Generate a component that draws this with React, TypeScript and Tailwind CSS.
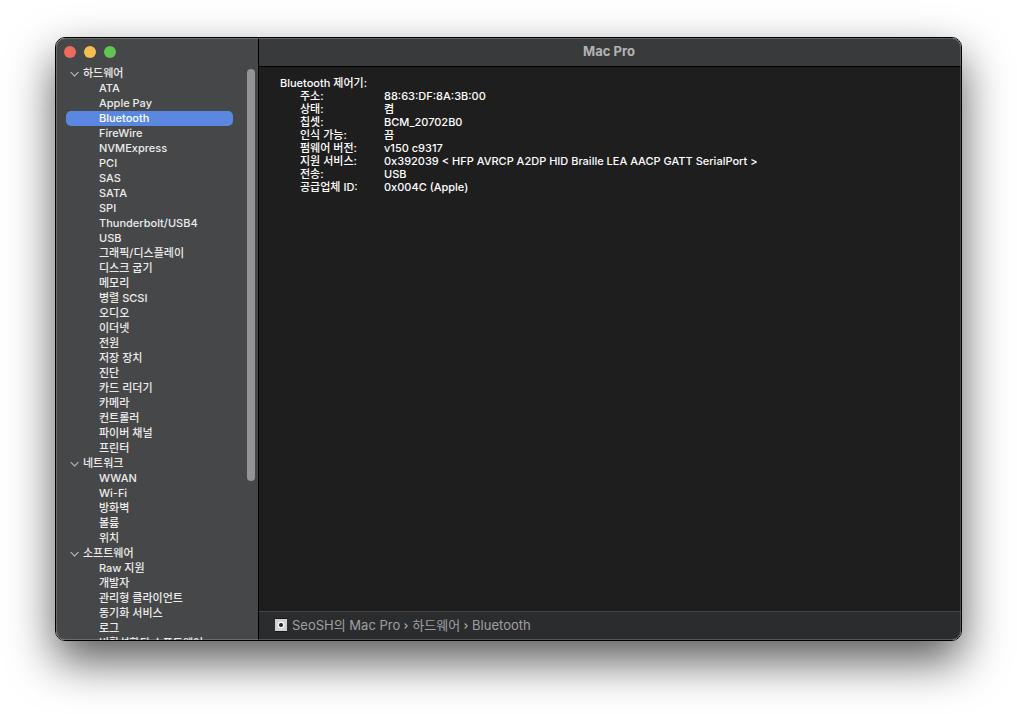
import { useState } from "react";
import { clsx } from "clsx";

type Section = {
  title: string;
  items: string[];
};

type DetailRow = {
  label: string;
  value: string;
};

const sections: Section[] = [
  {
    title: "하드웨어",
    items: [
      "ATA",
      "Apple Pay",
      "Bluetooth",
      "FireWire",
      "NVMExpress",
      "PCI",
      "SAS",
      "SATA",
      "SPI",
      "Thunderbolt/USB4",
      "USB",
      "그래픽/디스플레이",
      "디스크 굽기",
      "메모리",
      "병렬 SCSI",
      "오디오",
      "이더넷",
      "전원",
      "저장 장치",
      "진단",
      "카드 리더기",
      "카메라",
      "컨트롤러",
      "파이버 채널",
      "프린터",
    ],
  },
  {
    title: "네트워크",
    items: ["WWAN", "Wi-Fi", "방화벽", "볼륨", "위치"],
  },
  {
    title: "소프트웨어",
    items: [
      "Raw 지원",
      "개발자",
      "관리형 클라이언트",
      "동기화 서비스",
      "로그",
      "비활성화된 소프트웨어",
    ],
  },
];

const bluetoothRows: DetailRow[] = [
  { label: "주소:", value: "88:63:DF:8A:3B:00" },
  { label: "상태:", value: "켬" },
  { label: "칩셋:", value: "BCM_20702B0" },
  { label: "인식 가능:", value: "끔" },
  { label: "펌웨어 버전:", value: "v150 c9317" },
  {
    label: "지원 서비스:",
    value: "0x392039 < HFP AVRCP A2DP HID Braille LEA AACP GATT SerialPort >",
  },
  { label: "전송:", value: "USB" },
  { label: "공급업체 ID:", value: "0x004C (Apple)" },
];

function WindowControls() {
  return (
    <div className="flex h-7 shrink-0 items-center gap-2 pl-2">
      <button type="button" aria-label="닫기" className="size-3 rounded-full bg-[#ed6a5e]" />
      <button type="button" aria-label="최소화" className="size-3 rounded-full bg-[#f4bf4f]" />
      <button type="button" aria-label="확대" className="size-3 rounded-full bg-[#61c554]" />
    </div>
  );
}

function Disclosure({ open }: { open: boolean }) {
  return (
    <svg
      viewBox="0 0 9 9"
      className={clsx("size-[9px] shrink-0", !open && "-rotate-90")}
      fill="none"
      aria-hidden
    >
      <path
        d="M1.1 3.4 4.6 7 8.1 3.4"
        stroke="#adadae"
        strokeWidth="1.3"
        strokeLinecap="round"
        strokeLinejoin="round"
      />
    </svg>
  );
}

function Sidebar({
  selected,
  onSelect,
}: {
  selected: string;
  onSelect: (item: string) => void;
}) {
  const [collapsed, setCollapsed] = useState<string[]>([]);

  const toggle = (title: string) =>
    setCollapsed((prev) =>
      prev.includes(title) ? prev.filter((t) => t !== title) : [...prev, title],
    );

  return (
    <aside className="relative flex w-[203px] shrink-0 flex-col border-r border-black bg-[#464749]">
      <WindowControls />
      <nav
        aria-label="항목"
        className="min-h-0 flex-1 overflow-hidden pr-[25px] pl-2.5 text-[11px] leading-[15px] font-medium text-[#ececec]"
      >
        {sections.map((section) => {
          const open = !collapsed.includes(section.title);
          return (
            <section key={section.title}>
              <button
                type="button"
                aria-expanded={open}
                onClick={() => toggle(section.title)}
                className="flex h-[15px] w-full items-center gap-1 pl-1"
              >
                <Disclosure open={open} />
                {section.title}
              </button>
              {open && (
                <ul>
                  {section.items.map((item) => (
                    <li key={item}>
                      <button
                        type="button"
                        onClick={() => onSelect(item)}
                        className={clsx(
                          "block h-[15px] w-full rounded-[5px] pl-[33px] text-left whitespace-nowrap",
                          item === selected && "bg-[#5a88e0] text-white",
                        )}
                      >
                        {item}
                      </button>
                    </li>
                  ))}
                </ul>
              )}
            </section>
          );
        })}
      </nav>
      {/* overlay scroller */}
      <div className="absolute top-[31px] right-[3px] h-[412px] w-2 rounded-full bg-[#949496]" />
    </aside>
  );
}

function DetailPane() {
  return (
    <main className="min-h-0 flex-1 overflow-hidden bg-[#1e1e1e] px-[21px] pt-2.5 text-[11px] leading-[13px] font-medium text-white">
      <h2>Bluetooth 제어기:</h2>
      <table className="ml-5 border-collapse text-left">
        <tbody>
          {bluetoothRows.map((row) => (
            <tr key={row.label}>
              <th scope="row" className="w-[84px] p-0 font-medium">
                {row.label}
              </th>
              <td className="p-0">{row.value}</td>
            </tr>
          ))}
        </tbody>
      </table>
    </main>
  );
}

function DiskIcon() {
  return (
    <svg viewBox="0 0 12 14" className="mr-px h-3.5 w-3" aria-hidden>
      <rect x="0" y="0" width="12" height="14" fill="#161617" />
      <rect x="0" y="1" width="12" height="12" fill="#d2d2d4" />
      <circle cx="6" cy="7" r="3.4" fill="#f3f3f3" />
      <circle cx="6" cy="7" r="2" fill="#1a1a1a" />
      <circle cx="6" cy="7" r="0.6" fill="#555" />
    </svg>
  );
}

function PathSeparator() {
  return (
    <svg viewBox="0 0 4 6" className="mt-px h-1.5 w-1" fill="none" aria-hidden>
      <path d="M0.7 0.5 3.2 3 0.7 5.5" stroke="#a4a4a6" strokeWidth="1.2" />
    </svg>
  );
}

function PathBar({ selected }: { selected: string }) {
  return (
    <footer className="h-[29px] shrink-0 border-t border-[#454547] bg-[#2b2c2e] pl-4">
      <nav
        aria-label="경로"
        className="flex h-full items-center gap-1 pb-0.5 text-[13px] leading-4 whitespace-nowrap text-[#a0a0a2]"
      >
        <DiskIcon />
        <a href="#mac">SeoSH의 Mac Pro</a>
        <PathSeparator />
        <a href="#hardware">하드웨어</a>
        <PathSeparator />
        <a href="#selected">{selected}</a>
      </nav>
    </footer>
  );
}

export default function App() {
  const [selected, setSelected] = useState("Bluetooth");

  return (
    <div className="flex h-screen overflow-hidden bg-white px-[55px] pt-[37px] pb-[73px] font-['Inter','Noto_Sans_CJK_KR',sans-serif]">
      <div className="relative flex min-w-0 flex-1 overflow-hidden rounded-[10px] border border-black shadow-[0_20px_46px_rgba(0,0,0,0.65)]">
        <Sidebar selected={selected} onSelect={setSelected} />
        <div className="flex min-w-0 flex-1 flex-col">
          <header className="flex h-[29px] shrink-0 items-center justify-center border-b border-black bg-[#393a3c] pr-0.5 pb-0.5">
            <h1 className="text-[13px] leading-4 font-bold text-[#b3b3b5]">Mac Pro</h1>
          </header>
          <DetailPane />
          <PathBar selected={selected} />
        </div>
        {/* light inner rim of the window */}
        <div className="pointer-events-none absolute inset-0 rounded-[9px] border border-white/20" />
      </div>
    </div>
  );
}
